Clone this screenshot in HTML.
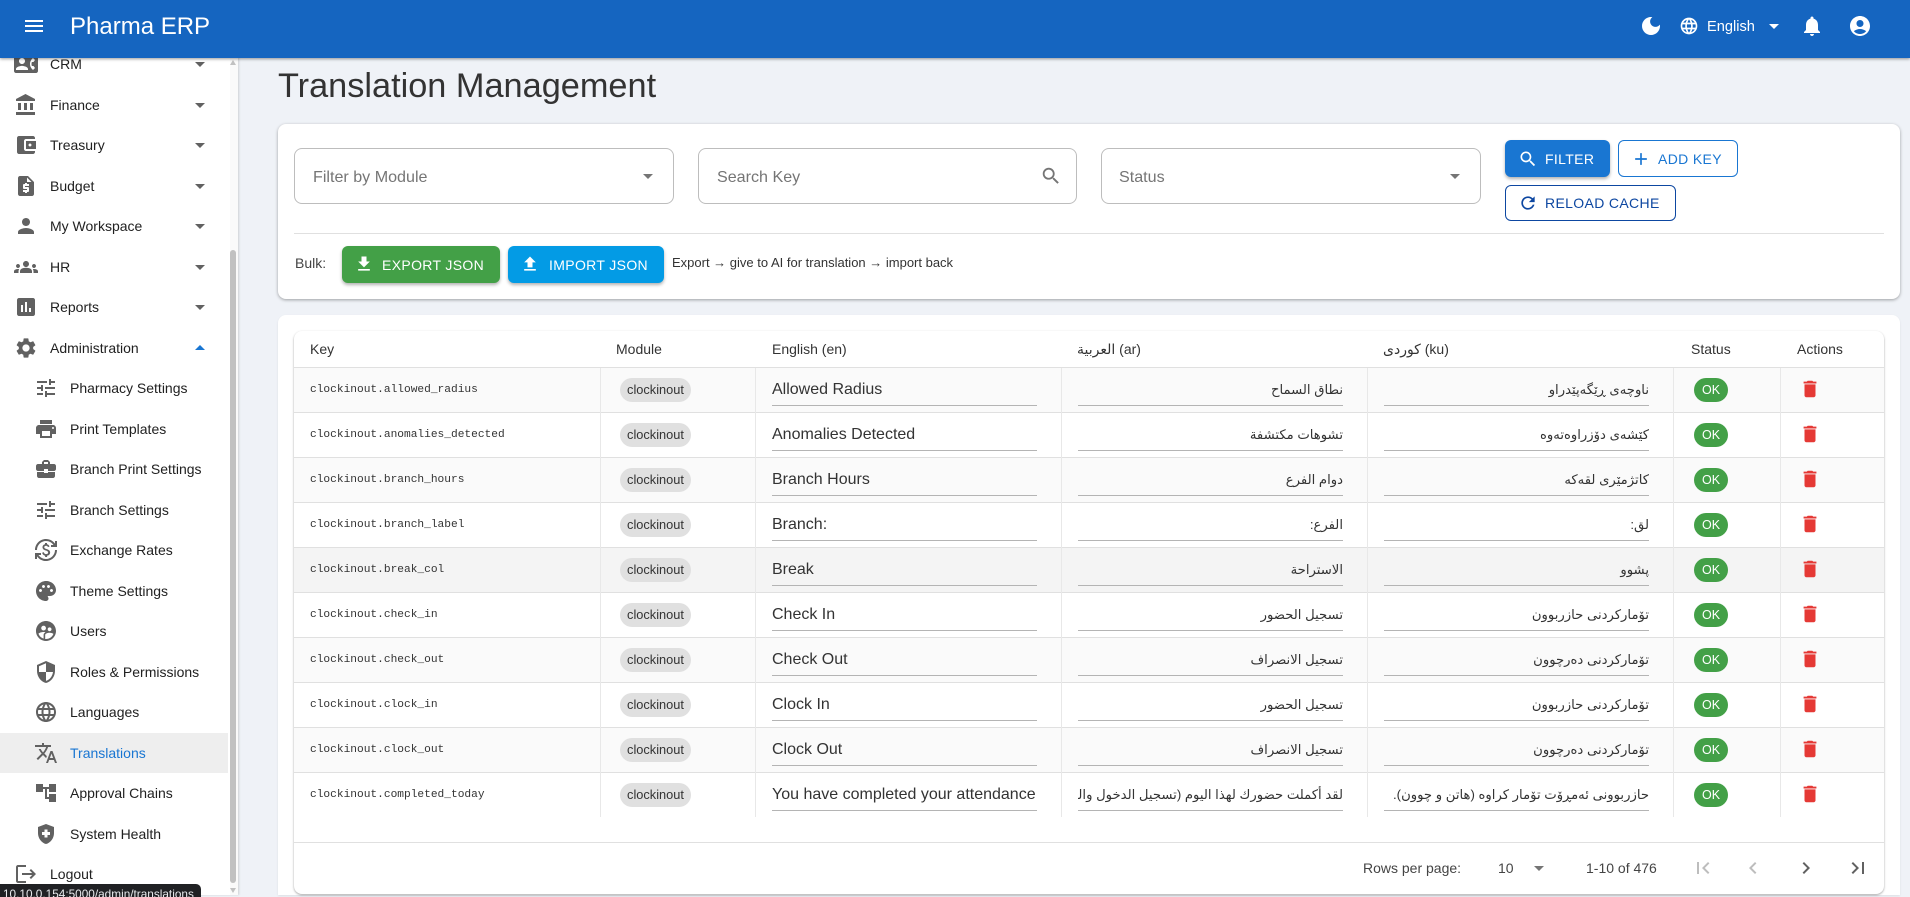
<!DOCTYPE html>
<html lang="en">
<head>
<meta charset="utf-8">
<title>Translation Management</title>
<style>
*{box-sizing:border-box}
html,body{margin:0;padding:0;width:1910px;height:897px;overflow:hidden;background:#eff2f7;font-family:"Liberation Sans",Arial,sans-serif;color:#212121}
svg{position:absolute;display:block;fill:currentColor}
.abs{position:absolute}
.t{position:absolute;white-space:nowrap;line-height:20px}
#bar{position:absolute;left:0;top:0;width:1910px;height:58px;background:#1565c0;box-shadow:0 1px 3px rgba(0,0,0,.4);z-index:5;color:#fff}
#side{position:absolute;left:0;top:0;width:238px;height:895px;background:#fff;box-shadow:1px 0 2px rgba(0,0,0,.14);overflow:hidden;z-index:2}
#side .t{font-size:14px;color:#212121;margin-top:-10px}
#side svg{color:#616161;width:24px;height:24px;margin-top:-12px}
.card{position:absolute;background:#fff;border-radius:8px}
.fld{position:absolute;top:148px;height:56px;border:1px solid #bdbdbd;border-radius:8px;background:#fff}
.lbl{position:absolute;top:167px;font-size:16.1px;line-height:20px;color:#757575;white-space:nowrap}
.btn{position:absolute;border-radius:6px;font-size:14px;letter-spacing:.35px;line-height:20px}
.btn .t{top:50%;margin-top:-10px}
.r{position:absolute;left:294px;width:1590px;height:45px;border-bottom:1px solid #e0e0e0;background:#fff}
.a{background:#fafafa}
.h{background:#f4f4f4}
.k{position:absolute;left:16px;top:13px;font:11.2px/18px "Liberation Mono",monospace;color:#333;white-space:nowrap}
.c{position:absolute;left:326px;top:10px;width:71px;height:24px;border-radius:12px;background:#e0e0e0;font-size:12.8px;line-height:24px;text-align:center;color:#333}
.e,.ar,.ku{position:absolute;top:11px;height:27px;border-bottom:1px solid #b4b4b4;line-height:21px;white-space:nowrap;overflow:hidden;color:#333}
.e{left:478px;width:265px;font-size:16px}
.ar{left:784px;width:265px;font-size:13.2px;direction:rtl;text-align:right;font-family:"Liberation Sans","DejaVu Sans",sans-serif}
.ku{left:1090px;width:265px;font-size:13.2px;direction:rtl;text-align:right;font-family:"Liberation Sans","DejaVu Sans",sans-serif}
.ok{position:absolute;left:1400px;top:10px;width:34px;height:24px;border-radius:12px;background:#43a047;color:#fff;font-size:12.5px;line-height:24px;text-align:center}
.d{position:absolute;left:1505px;top:10px;width:22px;height:22px;color:#e53935}
.v{position:absolute;top:368px;height:449px;width:1px;background:#e8e8e8;z-index:1}
.th{position:absolute;top:339px;font-size:14px;line-height:20px;color:#333;white-space:nowrap}
.pg{position:absolute;top:858px;font-size:14px;line-height:20px;color:#444;white-space:nowrap}
</style>
</head>
<body>
<svg width="0" height="0" style="position:absolute">
<defs>
<symbol id="i-menu" viewBox="0 0 24 24"><path d="M3 18h18v-2H3v2zm0-5h18v-2H3v2zm0-7v2h18V6H3z"/></symbol>
<symbol id="i-crm" viewBox="0 0 24 24"><path d="M22 3H2C.9 3 0 3.9 0 5v14c0 1.1.9 2 2 2h20c1.1 0 1.99-.9 1.99-2L24 5c0-1.1-.9-2-2-2zM8 6c1.66 0 3 1.34 3 3s-1.34 3-3 3-3-1.34-3-3 1.34-3 3-3zm6 12H2v-1c0-2 4-3.1 6-3.1s6 1.1 6 3.1v1zm3.85-4h1.64L21 16l-1.99 1.99c-1.31-.98-2.28-2.38-2.73-3.99-.18-.64-.28-1.31-.28-2s.1-1.36.28-2c.45-1.62 1.42-3.01 2.73-3.99L21 8l-1.51 2h-1.64c-.22.63-.35 1.3-.35 2s.13 1.37.35 2z"/></symbol>
<symbol id="i-bank" viewBox="0 0 24 24"><path d="M4 10v7h3v-7H4zm6 0v7h3v-7h-3zM2 22h19v-3H2v3zm14-12v7h3v-7h-3zm-4.5-9L2 6v2h19V6l-9.5-5z"/></symbol>
<symbol id="i-wallet" viewBox="0 0 24 24"><path d="M21 18v1c0 1.1-.9 2-2 2H5c-1.11 0-2-.9-2-2V5c0-1.1.89-2 2-2h14c1.1 0 2 .9 2 2v1h-9c-1.11 0-2 .9-2 2v8c0 1.1.89 2 2 2h9zm-9-2h10V8H12v8zm4-2.5c-.83 0-1.5-.67-1.5-1.5s.67-1.5 1.5-1.5 1.5.67 1.5 1.5-.67 1.5-1.5 1.5z"/></symbol>
<symbol id="i-quote" viewBox="0 0 24 24"><path d="M14 2H6c-1.1 0-1.99.9-1.99 2L4 20c0 1.1.89 2 1.99 2H18c1.1 0 2-.9 2-2V8l-6-6zm1 10h-4v1h3c.55 0 1 .45 1 1v3c0 .55-.45 1-1 1h-1v1h-2v-1H9v-2h4v-1h-3c-.55 0-1-.45-1-1v-3c0-.55.45-1 1-1h1V9h2v1h2v2zm-2-4V3.5L17.5 8H13z"/></symbol>
<symbol id="i-person" viewBox="0 0 24 24"><path d="M12 12c2.21 0 4-1.79 4-4s-1.79-4-4-4-4 1.79-4 4 1.79 4 4 4zm0 2c-2.67 0-8 1.34-8 4v2h16v-2c0-2.66-5.33-4-8-4z"/></symbol>
<symbol id="i-groups" viewBox="0 0 24 24"><path d="M12 12.75c1.63 0 3.07.39 4.24.9 1.08.48 1.76 1.56 1.76 2.73V18H6v-1.61c0-1.18.68-2.26 1.76-2.73 1.17-.52 2.61-.91 4.24-.91zM4 13c1.1 0 2-.9 2-2s-.9-2-2-2-2 .9-2 2 .9 2 2 2zm1.13 1.1c-.37-.06-.74-.1-1.13-.1-.99 0-1.93.21-2.78.58C.48 14.9 0 15.62 0 16.43V18h4.5v-1.61c0-.83.23-1.61.63-2.29zM20 13c1.1 0 2-.9 2-2s-.9-2-2-2-2 .9-2 2 .9 2 2 2zm4 3.43c0-.81-.48-1.53-1.22-1.85-.85-.37-1.79-.58-2.78-.58-.39 0-.76.04-1.13.1.4.68.63 1.46.63 2.29V18H24v-1.57zM12 6c1.66 0 3 1.34 3 3s-1.34 3-3 3-3-1.34-3-3 1.34-3 3-3z"/></symbol>
<symbol id="i-chart" viewBox="0 0 24 24"><path d="M19 3H5c-1.1 0-2 .9-2 2v14c0 1.1.9 2 2 2h14c1.1 0 2-.9 2-2V5c0-1.1-.9-2-2-2zM9 17H7v-7h2v7zm4 0h-2V7h2v10zm4 0h-2v-4h2v4z"/></symbol>
<symbol id="i-gear" viewBox="0 0 24 24"><path d="M19.14 12.94c.04-.3.06-.61.06-.94 0-.32-.02-.64-.07-.94l2.03-1.58c.18-.14.23-.41.12-.61l-1.92-3.32c-.12-.22-.37-.29-.59-.22l-2.39.96c-.5-.38-1.03-.7-1.62-.94l-.36-2.54c-.04-.24-.24-.41-.48-.41h-3.84c-.24 0-.43.17-.47.41l-.36 2.54c-.59.24-1.13.57-1.62.94l-2.39-.96c-.22-.08-.47 0-.59.22L2.74 8.87c-.12.21-.08.47.12.61l2.03 1.58c-.05.3-.09.63-.09.94s.02.64.07.94l-2.03 1.58c-.18.14-.23.41-.12.61l1.92 3.32c.12.22.37.29.59.22l2.39-.96c.5.38 1.03.7 1.62.94l.36 2.54c.05.24.24.41.48.41h3.84c.24 0 .44-.17.47-.41l.36-2.54c.59-.24 1.13-.56 1.62-.94l2.39.96c.22.08.47 0 .59-.22l1.92-3.32c.12-.22.07-.47-.12-.61l-2.01-1.58zM12 15.6c-1.98 0-3.6-1.62-3.6-3.6s1.62-3.6 3.6-3.6 3.6 1.62 3.6 3.6-1.62 3.6-3.6 3.6z"/></symbol>
<symbol id="i-tune" viewBox="0 0 24 24"><path d="M3 17v2h6v-2H3zM3 5v2h10V5H3zm10 16v-2h8v-2h-8v-2h-2v6h2zM7 9v2H3v2h4v2h2V9H7zm14 4v-2H11v2h10zm-6-4h2V7h4V5h-4V3h-2v6z"/></symbol>
<symbol id="i-print" viewBox="0 0 24 24"><path d="M19 8H5c-1.66 0-3 1.34-3 3v6h4v4h12v-4h4v-6c0-1.66-1.34-3-3-3zm-3 11H8v-5h8v5zm3-7c-.55 0-1-.45-1-1s.45-1 1-1 1 .45 1 1-.45 1-1 1zm-1-9H6v4h12V3z"/></symbol>
<symbol id="i-case" viewBox="0 0 24 24"><path d="M10 16v-1H3.01L3 19c0 1.11.89 2 2 2h14c1.11 0 2-.89 2-2v-4h-7v1h-4zm10-9h-4.01V5l-2-2h-4l-2 2v2H4c-1.1 0-2 .9-2 2v3c0 1.11.89 2 2 2h6v-2h4v2h6c1.1 0 2-.9 2-2V9c0-1.1-.9-2-2-2zm-6 0h-4V5h4v2z"/></symbol>
<symbol id="i-fx" viewBox="0 0 24 24"><path d="M12.89 11.1c-1.78-.59-2.64-.96-2.64-1.9 0-1.02 1.11-1.39 1.81-1.39 1.31 0 1.79.99 1.9 1.34l1.58-.67c-.15-.45-.82-1.92-2.54-2.24V5h-2v1.26c-2.48.56-2.49 2.86-2.49 2.96 0 2.27 2.25 2.91 3.35 3.31 1.58.56 2.28 1.07 2.28 2.03 0 1.13-1.05 1.61-1.98 1.61-1.82 0-2.34-1.87-2.4-2.09l-1.66.67c.63 2.19 2.28 2.78 3.02 2.96V19h2v-1.24c.52-.09 3.02-.59 3.02-3.22.01-1.39-.6-2.61-3.25-3.44zM3 21H1v-6h6v2H4.52c1.61 2.41 4.36 4 7.48 4 4.97 0 9-4.03 9-9h2c0 6.08-4.92 11-11 11-3.72 0-7.01-1.85-9-4.67V21zm-2-9C1 5.92 5.92 1 12 1c3.72 0 7.01 1.85 9 4.67V3h2v6h-6V7h2.48C17.87 4.59 15.12 3 12 3c-4.97 0-9 4.03-9 9H1z"/></symbol>
<symbol id="i-palette" viewBox="0 0 24 24"><path d="M12 2C6.49 2 2 6.49 2 12s4.49 10 10 10c1.38 0 2.5-1.12 2.5-2.5 0-.61-.23-1.2-.64-1.67-.08-.1-.13-.21-.13-.33 0-.28.22-.5.5-.5H16c3.31 0 6-2.69 6-6 0-4.96-4.49-9-10-9zm5.5 11c-.83 0-1.5-.67-1.5-1.5s.67-1.5 1.5-1.5 1.5.67 1.5 1.5-.67 1.5-1.5 1.5zm-3-4c-.83 0-1.5-.67-1.5-1.5S13.67 6 14.5 6s1.5.67 1.5 1.5S15.33 9 14.5 9zM5 11.5c0-.83.67-1.5 1.5-1.5s1.5.67 1.5 1.5S7.33 13 6.5 13 5 12.33 5 11.5zm6-4c0 .83-.67 1.5-1.5 1.5S8 8.33 8 7.5 8.67 6 9.5 6s1.5.67 1.5 1.5z"/></symbol>
<symbol id="i-users" viewBox="0 0 24 24"><path d="M11.99 2c-5.52 0-10 4.48-10 10s4.48 10 10 10 10-4.48 10-10-4.48-10-10-10zm3.61 6.34c1.07 0 1.93.86 1.93 1.93 0 1.07-.86 1.93-1.93 1.93-1.07 0-1.93-.86-1.93-1.93-.01-1.07.86-1.93 1.93-1.93zm-6-1.58c1.3 0 2.36 1.06 2.36 2.36 0 1.3-1.06 2.36-2.36 2.36s-2.36-1.06-2.36-2.36c0-1.31 1.05-2.36 2.36-2.36zm0 9.13v3.75c-2.4-.75-4.3-2.6-5.14-4.96 1.05-1.12 3.67-1.69 5.14-1.69.53 0 1.2.08 1.9.22-1.64.87-1.9 2.02-1.9 2.68zM11.99 20c-.27 0-.53-.01-.79-.04v-4.07c0-1.42 2.94-2.13 4.4-2.13 1.07 0 2.92.39 3.84 1.15-1.17 2.97-4.06 5.09-7.45 5.09z"/></symbol>
<symbol id="i-shield" viewBox="0 0 24 24"><path d="M12 1 3 5v6c0 5.55 3.84 10.74 9 12 5.16-1.26 9-6.45 9-12V5l-9-4zm0 10.99h7c-.53 4.12-3.28 7.79-7 8.94V12H5V6.3l7-3.11v8.8z"/></symbol>
<symbol id="i-globe" viewBox="0 0 24 24"><path d="M11.99 2C6.47 2 2 6.48 2 12s4.47 10 9.99 10C17.52 22 22 17.52 22 12S17.52 2 11.99 2zm6.93 6h-2.95c-.32-1.25-.78-2.45-1.38-3.56 1.84.63 3.37 1.91 4.33 3.56zM12 4.04c.83 1.2 1.48 2.53 1.91 3.96h-3.82c.43-1.43 1.08-2.76 1.91-3.96zM4.26 14C4.1 13.36 4 12.69 4 12s.1-1.36.26-2h3.38c-.08.66-.14 1.32-.14 2s.06 1.34.14 2H4.26zm.82 2h2.95c.32 1.25.78 2.45 1.38 3.56-1.84-.63-3.37-1.9-4.33-3.56zm2.95-8H5.08c.96-1.66 2.49-2.93 4.33-3.56C8.81 5.55 8.35 6.75 8.03 8zM12 19.96c-.83-1.2-1.48-2.53-1.91-3.96h3.82c-.43 1.43-1.08 2.76-1.91 3.96zM14.34 14H9.66c-.09-.66-.16-1.32-.16-2s.07-1.35.16-2h4.68c.09.65.16 1.32.16 2s-.07 1.34-.16 2zm.25 5.56c.6-1.11 1.06-2.31 1.38-3.56h2.95c-.96 1.65-2.49 2.93-4.33 3.56zM16.36 14c.08-.66.14-1.32.14-2s-.06-1.34-.14-2h3.38c.16.64.26 1.31.26 2s-.1 1.36-.26 2h-3.38z"/></symbol>
<symbol id="i-trans" viewBox="0 0 24 24"><path d="m12.87 15.07-2.54-2.51.03-.03c1.74-1.94 2.98-4.17 3.71-6.53H17V4h-7V2H8v2H1v1.99h11.17C11.5 7.92 10.44 9.75 9 11.35 8.07 10.32 7.3 9.19 6.69 8h-2c.73 1.63 1.73 3.17 2.98 4.56l-5.09 5.02L4 19l5-5 3.11 3.11.76-2.04zM18.5 10h-2L12 22h2l1.12-3h4.75L21 22h2l-4.5-12zm-2.62 7 1.62-4.33L19.12 17h-3.24z"/></symbol>
<symbol id="i-tree" viewBox="0 0 24 24"><path d="M22 11V3h-7v3H9V3H2v8h7V8h2v10h4v3h7v-8h-7v3h-2V8h2v3z"/></symbol>
<symbol id="i-health" viewBox="0 0 24 24"><path d="M10.5 13H8v-3h2.5V7.5h3V10H16v3h-2.5v2.5h-3V13zM12 2 4 5v6.09c0 5.05 3.41 9.76 8 10.91 4.59-1.15 8-5.86 8-10.91V5l-8-3z"/></symbol>
<symbol id="i-logout" viewBox="0 0 24 24"><path d="m17 7-1.41 1.41L18.17 11H8v2h10.17l-2.58 2.58L17 17l5-5zM4 5h8V3H4c-1.1 0-2 .9-2 2v14c0 1.1.9 2 2 2h8v-2H4V5z"/></symbol>
<symbol id="i-moon" viewBox="0 0 24 24"><path d="M12 3c-4.97 0-9 4.03-9 9s4.03 9 9 9 9-4.03 9-9c0-.46-.04-.92-.1-1.36-.98 1.37-2.58 2.26-4.4 2.26-2.98 0-5.4-2.42-5.4-5.4 0-1.81.89-3.42 2.26-4.4-.44-.06-.9-.1-1.36-.1z"/></symbol>
<symbol id="i-bell" viewBox="0 0 24 24"><path d="M12 22c1.1 0 2-.9 2-2h-4c0 1.1.89 2 2 2zm6-6v-5c0-3.07-1.64-5.64-4.5-6.32V4c0-.83-.67-1.5-1.5-1.5s-1.5.67-1.5 1.5v.68C7.63 5.36 6 7.92 6 11v5l-2 2v1h16v-1l-2-2z"/></symbol>
<symbol id="i-acct" viewBox="0 0 24 24"><path d="M12 2C6.48 2 2 6.48 2 12s4.48 10 10 10 10-4.48 10-10S17.52 2 12 2zm0 4c1.93 0 3.5 1.57 3.5 3.5S13.93 13 12 13s-3.5-1.57-3.5-3.5S10.07 6 12 6zm0 14c-2.03 0-4.43-.82-6.14-2.88C7.55 15.8 9.68 15 12 15s4.45.8 6.14 2.12C16.43 19.18 14.03 20 12 20z"/></symbol>
<symbol id="i-search" viewBox="0 0 24 24"><path d="M15.5 14h-.79l-.28-.27C15.41 12.59 16 11.11 16 9.5 16 5.91 13.09 3 9.5 3S3 5.91 3 9.5 5.91 16 9.5 16c1.61 0 3.09-.59 4.23-1.57l.27.28v.79l5 4.99L20.49 19l-4.99-5zm-6 0C7.01 14 5 11.99 5 9.5S7.01 5 9.5 5 14 7.01 14 9.5 11.99 14 9.5 14z"/></symbol>
<symbol id="i-add" viewBox="0 0 24 24"><path d="M19 13h-6v6h-2v-6H5v-2h6V5h2v6h6v2z"/></symbol>
<symbol id="i-refresh" viewBox="0 0 24 24"><path d="M17.65 6.35C16.2 4.9 14.21 4 12 4c-4.42 0-7.99 3.58-7.99 8s3.57 8 7.99 8c3.73 0 6.84-2.55 7.73-6h-2.08c-.82 2.33-3.04 4-5.65 4-3.31 0-6-2.69-6-6s2.69-6 6-6c1.66 0 3.14.69 4.22 1.78L13 11h7V4l-2.35 2.35z"/></symbol>
<symbol id="i-down" viewBox="0 0 24 24"><path d="M19 9h-4V3H9v6H5l7 7 7-7zM5 18v2h14v-2H5z"/></symbol>
<symbol id="i-up" viewBox="0 0 24 24"><path d="M9 16h6v-6h4l-7-7-7 7h4zm-4 2h14v2H5z"/></symbol>
<symbol id="i-del" viewBox="0 0 24 24"><path d="M6 19c0 1.1.9 2 2 2h8c1.1 0 2-.9 2-2V7H6v12zM19 4h-3.5l-1-1h-5l-1 1H5v2h14V4z"/></symbol>
<symbol id="i-dd" viewBox="0 0 24 24"><path d="m7 10 5 5 5-5z"/></symbol>
<symbol id="i-du" viewBox="0 0 24 24"><path d="m7 14 5-5 5 5z"/></symbol>
<symbol id="i-first" viewBox="0 0 24 24"><path d="M18.41 16.59 13.82 12l4.59-4.59L17 6l-6 6 6 6zM6 6h2v12H6z"/></symbol>
<symbol id="i-last" viewBox="0 0 24 24"><path d="M5.59 7.41 10.18 12l-4.59 4.59L7 18l6-6-6-6zM16 6h2v12h-2z"/></symbol>
<symbol id="i-prev" viewBox="0 0 24 24"><path d="M15.41 7.41 14 6l-6 6 6 6 1.41-1.41L10.83 12z"/></symbol>
<symbol id="i-next" viewBox="0 0 24 24"><path d="M10 6 8.59 7.41 13.17 12l-4.58 4.59L10 18l6-6z"/></symbol>
</defs>
</svg>

<div id="bar">
  <svg style="left:22px;top:14px;width:24px;height:24px"><use href="#i-menu"/></svg>
  <div class="t" style="left:70px;top:15px;font-size:24px;line-height:24px;color:#fff">Pharma ERP</div>
  <svg style="left:1639px;top:14px;width:24px;height:24px"><use href="#i-moon"/></svg>
  <svg style="left:1679px;top:16px;width:20px;height:20px"><use href="#i-globe"/></svg>
  <div class="t" style="left:1707px;top:17px;font-size:14.6px;color:#fff">English</div>
  <svg style="left:1762px;top:14px;width:24px;height:24px"><use href="#i-dd"/></svg>
  <svg style="left:1800px;top:14px;width:24px;height:24px"><use href="#i-bell"/></svg>
  <svg style="left:1848px;top:14px;width:24px;height:24px"><use href="#i-acct"/></svg>
</div>

<div id="side">
  <div class="abs" style="left:230px;top:58px;width:8px;height:837px;background:#fafafa"></div>
  <svg style="left:14px;top:64px"><use href="#i-crm"/></svg><div class="t" style="left:50px;top:64px">CRM</div><svg style="left:188px;top:64px"><use href="#i-dd"/></svg>
  <svg style="left:14px;top:105px"><use href="#i-bank"/></svg><div class="t" style="left:50px;top:105px">Finance</div><svg style="left:188px;top:105px"><use href="#i-dd"/></svg>
  <svg style="left:14px;top:145px"><use href="#i-wallet"/></svg><div class="t" style="left:50px;top:145px">Treasury</div><svg style="left:188px;top:145px"><use href="#i-dd"/></svg>
  <svg style="left:14px;top:186px"><use href="#i-quote"/></svg><div class="t" style="left:50px;top:186px">Budget</div><svg style="left:188px;top:186px"><use href="#i-dd"/></svg>
  <svg style="left:14px;top:226px"><use href="#i-person"/></svg><div class="t" style="left:50px;top:226px">My Workspace</div><svg style="left:188px;top:226px"><use href="#i-dd"/></svg>
  <svg style="left:14px;top:267px"><use href="#i-groups"/></svg><div class="t" style="left:50px;top:267px">HR</div><svg style="left:188px;top:267px"><use href="#i-dd"/></svg>
  <svg style="left:14px;top:307px"><use href="#i-chart"/></svg><div class="t" style="left:50px;top:307px">Reports</div><svg style="left:188px;top:307px"><use href="#i-dd"/></svg>
  <svg style="left:14px;top:348px"><use href="#i-gear"/></svg><div class="t" style="left:50px;top:348px">Administration</div><svg style="left:188px;top:348px;color:#1976d2"><use href="#i-du"/></svg>
  <svg style="left:34px;top:388px"><use href="#i-tune"/></svg><div class="t" style="left:70px;top:388px">Pharmacy Settings</div>
  <svg style="left:34px;top:429px"><use href="#i-print"/></svg><div class="t" style="left:70px;top:429px">Print Templates</div>
  <svg style="left:34px;top:469px"><use href="#i-case"/></svg><div class="t" style="left:70px;top:469px">Branch Print Settings</div>
  <svg style="left:34px;top:510px"><use href="#i-tune"/></svg><div class="t" style="left:70px;top:510px">Branch Settings</div>
  <svg style="left:34px;top:550px"><use href="#i-fx"/></svg><div class="t" style="left:70px;top:550px">Exchange Rates</div>
  <svg style="left:34px;top:591px"><use href="#i-palette"/></svg><div class="t" style="left:70px;top:591px">Theme Settings</div>
  <svg style="left:34px;top:631px"><use href="#i-users"/></svg><div class="t" style="left:70px;top:631px">Users</div>
  <svg style="left:34px;top:672px"><use href="#i-shield"/></svg><div class="t" style="left:70px;top:672px">Roles &amp; Permissions</div>
  <svg style="left:34px;top:712px"><use href="#i-globe"/></svg><div class="t" style="left:70px;top:712px">Languages</div>
  <div class="abs" style="left:0;top:733px;width:228px;height:40px;background:#eee"></div>
  <svg style="left:34px;top:753px"><use href="#i-trans"/></svg><div class="t" style="left:70px;top:753px;color:#1976d2">Translations</div>
  <svg style="left:34px;top:793px"><use href="#i-tree"/></svg><div class="t" style="left:70px;top:793px">Approval Chains</div>
  <svg style="left:34px;top:834px"><use href="#i-health"/></svg><div class="t" style="left:70px;top:834px">System Health</div>
  <svg style="left:14px;top:874px"><use href="#i-logout"/></svg><div class="t" style="left:50px;top:874px">Logout</div>
  <div class="abs" style="left:230px;top:250px;width:6px;height:633px;background:#c1c1c1;border-radius:3px"></div>
  <div class="abs" style="left:230px;top:60px;width:0;height:0;border-left:3px solid transparent;border-right:3px solid transparent;border-bottom:5px solid #c1c1c1"></div>
  <div class="abs" style="left:230px;top:888px;width:0;height:0;border-left:3px solid transparent;border-right:3px solid transparent;border-top:5px solid #c1c1c1"></div>
</div>

<div class="t" style="left:278px;top:66px;font-size:34.3px;line-height:40px;color:#333">Translation Management</div>

<div class="card" style="left:278px;top:124px;width:1622px;height:175px;box-shadow:0 1px 3px rgba(0,0,0,.35)"></div>
<div class="fld" style="left:294px;width:380px"></div>
<div class="lbl" style="left:313px">Filter by Module</div>
<svg style="left:636px;top:164px;width:24px;height:24px;color:#757575"><use href="#i-dd"/></svg>
<div class="fld" style="left:698px;width:379px"></div>
<div class="lbl" style="left:717px">Search Key</div>
<svg style="left:1040px;top:165px;width:22px;height:22px;color:#757575"><use href="#i-search"/></svg>
<div class="fld" style="left:1101px;width:380px"></div>
<div class="lbl" style="left:1119px">Status</div>
<svg style="left:1443px;top:164px;width:24px;height:24px;color:#757575"><use href="#i-dd"/></svg>

<div class="btn" style="left:1505px;top:140px;width:105px;height:37px;background:#1976d2;color:#fff;box-shadow:0 2px 3px rgba(0,0,0,.3)">
  <svg style="left:13px;top:9px;width:20px;height:20px"><use href="#i-search"/></svg><div class="t" style="left:40px">FILTER</div>
</div>
<div class="btn" style="left:1618px;top:140px;width:120px;height:37px;border:1px solid #1976d2;color:#1976d2;background:#fff">
  <svg style="left:12px;top:8px;width:20px;height:20px"><use href="#i-add"/></svg><div class="t" style="left:39px">ADD KEY</div>
</div>
<div class="btn" style="left:1505px;top:185px;width:171px;height:36px;border:1px solid #0d47a1;color:#0d47a1;background:#fff">
  <svg style="left:12px;top:7px;width:20px;height:20px"><use href="#i-refresh"/></svg><div class="t" style="left:39px">RELOAD CACHE</div>
</div>

<div class="abs" style="left:294px;top:233px;width:1590px;height:1px;background:#e0e0e0"></div>
<div class="t" style="left:295px;top:253px;font-size:14px;color:#444">Bulk:</div>
<div class="btn" style="left:342px;top:246px;width:158px;height:37px;background:#43a047;color:#fff;box-shadow:0 2px 3px rgba(0,0,0,.3)">
  <svg style="left:12px;top:8px;width:20px;height:20px"><use href="#i-down"/></svg><div class="t" style="left:40px">EXPORT JSON</div>
</div>
<div class="btn" style="left:508px;top:246px;width:156px;height:37px;background:#039be5;color:#fff;box-shadow:0 2px 3px rgba(0,0,0,.3)">
  <svg style="left:12px;top:8px;width:20px;height:20px"><use href="#i-up"/></svg><div class="t" style="left:41px">IMPORT JSON</div>
</div>
<div class="t" style="left:672px;top:253px;font-size:13px;color:#333">Export → give to AI for translation → import back</div>

<div class="card" style="left:278px;top:315px;width:1622px;height:580px;border-radius:8px 8px 0 0;box-shadow:0 1px 2px rgba(0,0,0,.08)"></div>
<div class="card" style="left:294px;top:331px;width:1590px;height:563px;box-shadow:0 1px 2px rgba(0,0,0,.35)"></div>

<div class="th" style="left:310px">Key</div>
<div class="th" style="left:616px">Module</div>
<div class="th" style="left:772px">English (en)</div>
<div class="th" style="left:1077px;font-family:'Liberation Sans','DejaVu Sans',sans-serif">العربية (ar)</div>
<div class="th" style="left:1383px;font-family:'Liberation Sans','DejaVu Sans',sans-serif">کوردی (ku)</div>
<div class="th" style="left:1691px">Status</div>
<div class="th" style="left:1797px">Actions</div>
<div class="abs" style="left:294px;top:367px;width:1590px;height:1px;background:#e0e0e0"></div>

<div class="r a" style="top:368px"><div class="k">clockinout.allowed_radius</div><div class="c">clockinout</div><div class="e">Allowed Radius</div><div class="ar">نطاق السماح</div><div class="ku">ناوچەی ڕێگەپێدراو</div><div class="ok">OK</div><svg class="d"><use href="#i-del"/></svg></div>
<div class="r" style="top:413px"><div class="k">clockinout.anomalies_detected</div><div class="c">clockinout</div><div class="e">Anomalies Detected</div><div class="ar">تشوهات مكتشفة</div><div class="ku">کێشەی دۆزراوەتەوە</div><div class="ok">OK</div><svg class="d"><use href="#i-del"/></svg></div>
<div class="r a" style="top:458px"><div class="k">clockinout.branch_hours</div><div class="c">clockinout</div><div class="e">Branch Hours</div><div class="ar">دوام الفرع</div><div class="ku">کاتژمێری لقەکە</div><div class="ok">OK</div><svg class="d"><use href="#i-del"/></svg></div>
<div class="r" style="top:503px"><div class="k">clockinout.branch_label</div><div class="c">clockinout</div><div class="e">Branch:</div><div class="ar">الفرع:</div><div class="ku">لق:</div><div class="ok">OK</div><svg class="d"><use href="#i-del"/></svg></div>
<div class="r h" style="top:548px"><div class="k">clockinout.break_col</div><div class="c">clockinout</div><div class="e">Break</div><div class="ar">الاستراحة</div><div class="ku">پشوو</div><div class="ok">OK</div><svg class="d"><use href="#i-del"/></svg></div>
<div class="r" style="top:593px"><div class="k">clockinout.check_in</div><div class="c">clockinout</div><div class="e">Check In</div><div class="ar">تسجيل الحضور</div><div class="ku">تۆمارکردنی حازربوون</div><div class="ok">OK</div><svg class="d"><use href="#i-del"/></svg></div>
<div class="r a" style="top:638px"><div class="k">clockinout.check_out</div><div class="c">clockinout</div><div class="e">Check Out</div><div class="ar">تسجيل الانصراف</div><div class="ku">تۆمارکردنی دەرچوون</div><div class="ok">OK</div><svg class="d"><use href="#i-del"/></svg></div>
<div class="r" style="top:683px"><div class="k">clockinout.clock_in</div><div class="c">clockinout</div><div class="e">Clock In</div><div class="ar">تسجيل الحضور</div><div class="ku">تۆمارکردنی حازربوون</div><div class="ok">OK</div><svg class="d"><use href="#i-del"/></svg></div>
<div class="r a" style="top:728px"><div class="k">clockinout.clock_out</div><div class="c">clockinout</div><div class="e">Clock Out</div><div class="ar">تسجيل الانصراف</div><div class="ku">تۆمارکردنی دەرچوون</div><div class="ok">OK</div><svg class="d"><use href="#i-del"/></svg></div>
<div class="r" style="top:773px;border-bottom:0;height:44px"><div class="k">clockinout.completed_today</div><div class="c">clockinout</div><div class="e">You have completed your attendance</div><div class="ar">لقد أكملت حضورك لهذا اليوم (تسجيل الدخول والخروج).</div><div class="ku">حازربوونی ئەمڕۆت تۆمار کراوە (هاتن و چوون).</div><div class="ok">OK</div><svg class="d"><use href="#i-del"/></svg></div>

<div class="v" style="left:600px"></div>
<div class="v" style="left:755px"></div>
<div class="v" style="left:1061px"></div>
<div class="v" style="left:1367px"></div>
<div class="v" style="left:1673px"></div>
<div class="v" style="left:1780px"></div>

<div class="abs" style="left:294px;top:842px;width:1590px;height:1px;background:#e0e0e0"></div>
<div class="pg" style="left:1363px">Rows per page:</div>
<div class="pg" style="left:1498px">10</div>
<svg style="left:1527px;top:856px;width:24px;height:24px;color:#757575"><use href="#i-dd"/></svg>
<div class="pg" style="left:1586px">1-10 of 476</div>
<svg style="left:1691px;top:856px;width:24px;height:24px;color:#bdbdbd"><use href="#i-first"/></svg>
<svg style="left:1741px;top:856px;width:24px;height:24px;color:#bdbdbd"><use href="#i-prev"/></svg>
<svg style="left:1794px;top:856px;width:24px;height:24px;color:#616161"><use href="#i-next"/></svg>
<svg style="left:1846px;top:856px;width:24px;height:24px;color:#616161"><use href="#i-last"/></svg>

<div class="abs" style="left:0;top:884px;width:201px;height:13px;background:#202124;border-top-right-radius:5px;color:#e8eaed;font-size:11.8px;line-height:16px;padding-left:3px;padding-top:2px;white-space:nowrap;overflow:hidden;z-index:9">10.10.0.154:5000/admin/translations</div>
</body>
</html>
